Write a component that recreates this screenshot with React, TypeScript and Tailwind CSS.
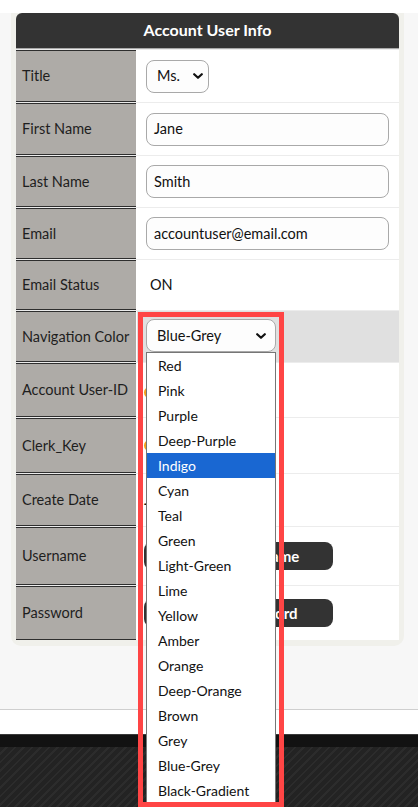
const COLORS = [
  'Red',
  'Pink',
  'Purple',
  'Deep-Purple',
  'Indigo',
  'Cyan',
  'Teal',
  'Green',
  'Light-Green',
  'Lime',
  'Yellow',
  'Amber',
  'Orange',
  'Deep-Orange',
  'Brown',
  'Grey',
  'Blue-Grey',
  'Black-Gradient',
]

function Chevron({ className = '' }: { className?: string }) {
  return (
    <svg viewBox="0 0 10 6" className={className} fill="none" stroke="currentColor" strokeWidth={2.2} strokeLinecap="round" strokeLinejoin="round">
      <path d="M1.2 1.2l3.8 3.6 3.8-3.6" />
    </svg>
  )
}

function Row({ label, h, children, valueClass = '' }: { label: string; h: string; children?: React.ReactNode; valueClass?: string }) {
  return (
    <div className={`flex border-t border-[#ececec] ${h}`}>
      <div className="flex w-[120px] shrink-0 items-center border-y border-[#2e2e2e] bg-[#aeaba7] pl-[6px] text-[14.5px] text-[#1e1e1e]">
        {label}
      </div>
      <div className={`ml-px flex flex-1 items-center ${valueClass}`}>{children}</div>
    </div>
  )
}

function TextInput({ value }: { value: string }) {
  return (
    <div className="flex h-[33px] w-[243px] items-center rounded-[8px] border border-[#a9a9a9] bg-[#fdfdfd] pl-[7px] text-[14.5px] text-[#111]">
      {value}
    </div>
  )
}

function DarkButton({ children }: { children: React.ReactNode }) {
  return (
    <div className="flex h-[28px] w-[189px] items-center justify-center rounded-[8px] bg-[#333] text-[15px] font-bold text-white">
      {children}
    </div>
  )
}

function NavColorSelect() {
  return (
    <div className="relative -mt-[2px]">
      <div className="flex h-[33px] w-[130px] items-center justify-between rounded-[8px] border border-[#a9a9a9] bg-[#fdfdfd] pr-[9px] pl-[10px] text-[14.5px] text-[#111]">
        Blue-Grey
        <Chevron className="h-[6px] w-[10px] text-[#111]" />
      </div>
      {/* opened option list */}
      <ul className="absolute top-[33px] left-0 z-10 w-[130px] border border-[#767676] bg-white text-[14px] text-[#111]">
        {COLORS.map((c) => (
          <li
            key={c}
            className={`flex h-[25px] items-center pl-[11px] ${c === 'Indigo' ? 'bg-[#1967d2] text-white' : ''}`}
          >
            {c}
          </li>
        ))}
      </ul>
      {/* highlight frame */}
      <div className="pointer-events-none absolute top-[-7px] left-[-8px] z-20 h-[495px] w-[146px] border-[5px] border-[#ff4545]" />
    </div>
  )
}

export default function App() {
  return (
    <div className="h-[807px] overflow-hidden font-['Lato','Noto_Sans',sans-serif]">
      <div className="h-[13px] bg-white" />
      <main className="bg-[#f7f7f7] pb-[63px]">
        <div className="ml-[11px] w-[393px] rounded-b-[10px] bg-[#f0f0eb] px-[5px] pb-[6px]">
          <div className="flex h-[36px] items-center justify-center rounded-t-[6px] border-b border-[#a8a8a8] bg-[#333] pb-px text-[16px] font-bold text-white">
            Account User Info
          </div>
          <div className="bg-white">
            <Row label="Title" h="h-[53px]" valueClass="pl-[9px]">
              <div className="flex h-[33px] w-[63px] items-center justify-between rounded-[8px] border border-[#a9a9a9] bg-[#fdfdfd] pr-[5px] pl-[10px] text-[14.5px] text-[#111]">
                Ms.
                <Chevron className="h-[6px] w-[10px] text-[#111]" />
              </div>
            </Row>
            <Row label="First Name" h="h-[53px]" valueClass="pl-[9px]">
              <TextInput value="Jane" />
            </Row>
            <Row label="Last Name" h="h-[52px]" valueClass="pl-[9px]">
              <TextInput value="Smith" />
            </Row>
            <Row label="Email" h="h-[52px]" valueClass="pl-[9px]">
              <TextInput value="accountuser@email.com" />
            </Row>
            <Row label="Email Status" h="h-[51px]" valueClass="pl-[13px] text-[14.5px] text-[#111]">
              ON
            </Row>
            <Row label="Navigation Color" h="h-[52px]" valueClass="bg-[#e0e0e0] pl-[9px]">
              <NavColorSelect />
            </Row>
            <Row label="Account User-ID" h="h-[55px]" valueClass="pl-[7px]">
              <span className="mt-[4px] h-[11px] w-[70px] rounded-full bg-[#f4a21b]" />
            </Row>
            <Row label="Clerk_Key" h="h-[56px]" valueClass="pl-[7px]">
              <span className="h-[11px] w-[90px] rounded-full bg-[#f4a21b]" />
            </Row>
            <Row label="Create Date" h="h-[53px]" valueClass="pl-[7px] text-[14.5px] text-[#111]">
              Jan 14, 2022
            </Row>
            <Row label="Username" h="h-[59px]" valueClass="pl-[7px]">
              <DarkButton>Change Username</DarkButton>
            </Row>
            <Row label="Password" h="h-[55px]" valueClass="pl-[7px]">
              <DarkButton>Change Password</DarkButton>
            </Row>
          </div>
        </div>
      </main>
      <div className="h-[25px] border-t border-[#cfcfcf] bg-white" />
      <footer className="flex h-[73px] flex-col border-t border-[#3a3a3a]">
        <div className="h-[12px] bg-[#121212]" />
        <div className="flex-1 bg-[repeating-linear-gradient(135deg,#232323_0px,#232323_4px,#2c2c2c_4px,#2c2c2c_6px)]" />
      </footer>
    </div>
  )
}
